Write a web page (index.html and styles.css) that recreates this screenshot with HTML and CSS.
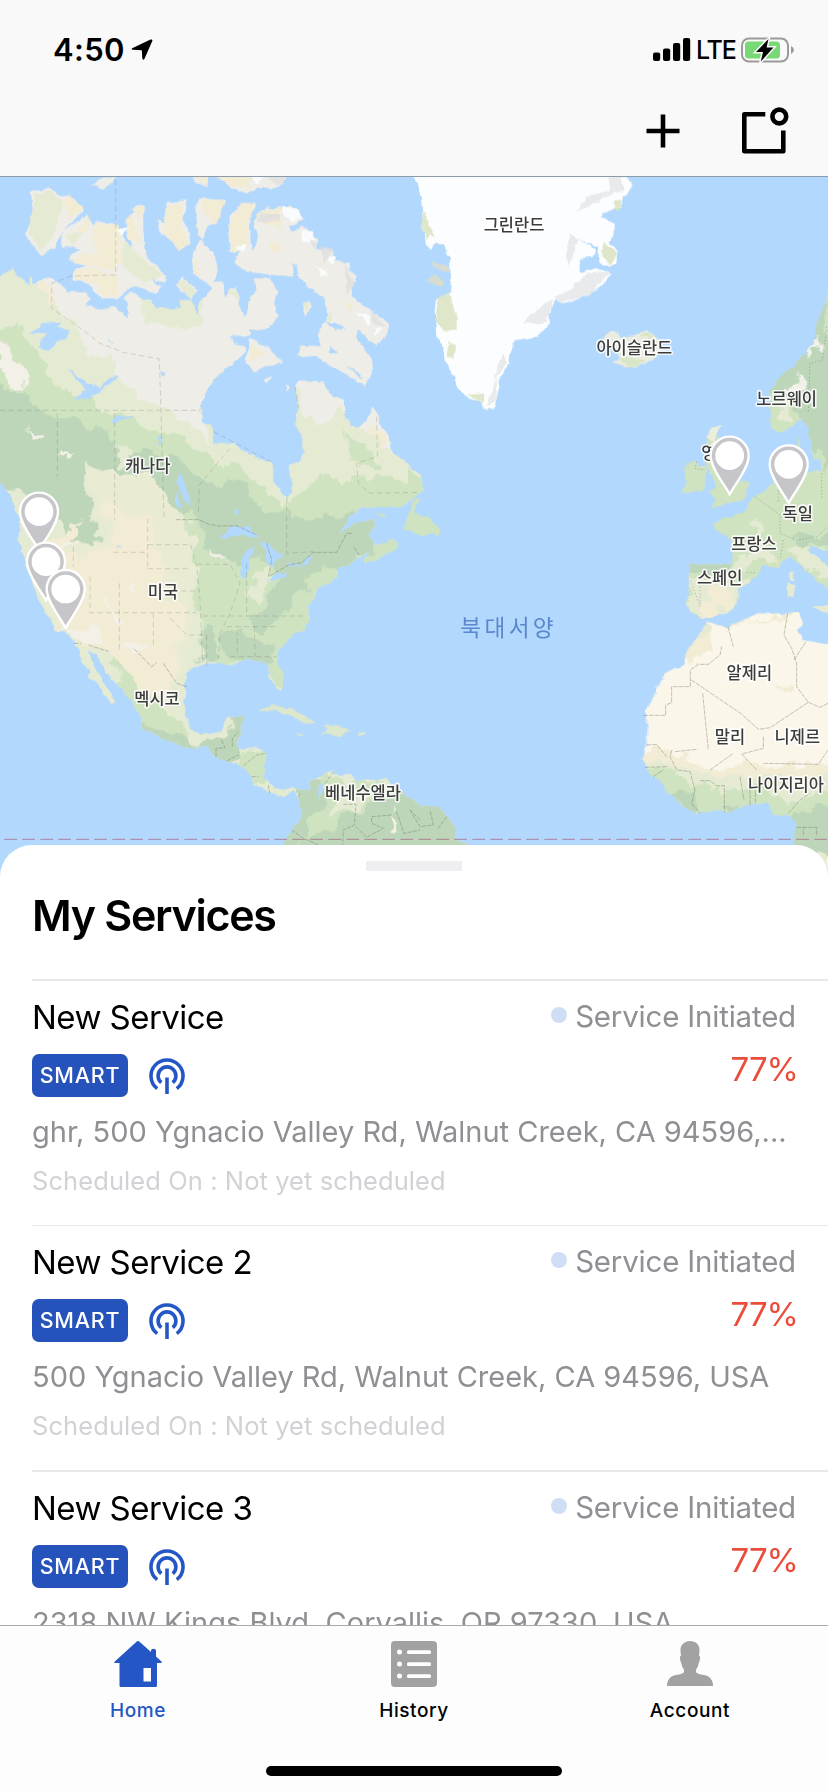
FILE: index.html
```html
<!DOCTYPE html>
<html lang="en">
<head>
<meta charset="utf-8">
<title>My Services</title>
<link rel="stylesheet" href="styles.css">
</head>
<body>
<svg class="defs" width="0" height="0" aria-hidden="true">
  <symbol id="beacon" viewBox="0 0 36 36">
    <g fill="none" stroke="#2457c5" stroke-width="3.6">
      <path d="M8.2 30.6A16 16 0 1 1 27.8 30.6"/>
      <path d="M12.3 24.6A8.9 8.9 0 1 1 23.7 24.6"/>
      <path d="M18 19.5V36"/>
    </g>
  </symbol>
</svg>
<div class="phone">
  <header class="header">
    <div class="status">
      <div class="clock">4:50
        <svg class="locate" width="22" height="22" viewBox="0 0 22 22"><path d="M1.2 9.2 19.5 .6Q22-.2 21.2 2.2L13.4 20Q12 21.6 11.3 19.6L10.8 11.2 2 10.8Q-.2 10.2 1.2 9.2Z"/></svg>
      </div>
      <div class="signals">
        <svg width="38" height="24" viewBox="0 0 38 24"><rect x="0" y="14.500" width="7.200" height="8.500" rx="2"/><rect x="10" y="10.500" width="7.200" height="12.500" rx="2"/><rect x="20" y="5" width="7.200" height="18" rx="2"/><rect x="30" y="0" width="7.200" height="23" rx="2"/></svg>
        <span class="lte">LTE</span>
        <svg class="battery" width="54" height="26" viewBox="0 0 54 26">
          <rect x="1" y="1.500" width="46" height="23" rx="7" fill="none" stroke="#9b9b9b" stroke-width="2"/>
          <rect x="4" y="4.500" width="35" height="17" rx="3.500" fill="#78d873"/>
          <path d="M50 9Q53 10.500 53 13T50 17Z" fill="#9b9b9b"/>
          <path d="M27.500 2 15 15H22L19.800 24.500 32.500 10.500H25.600Z" fill="#000" stroke="#f9f9f9" stroke-width="3" paint-order="stroke"/>
        </svg>
      </div>
    </div>
    <div class="actions">
      <svg width="34" height="34" viewBox="0 0 34 34"><path d="M17 .5V33.500M.5 17H33.500" stroke="#000" stroke-width="4.600"/></svg>
      <svg width="48" height="48" viewBox="0 0 48 48" fill="none" stroke="#000" stroke-width="4.600"><path d="M24.300 7.300H3.300V44.300H42.300V23.500" stroke-linejoin="round"/><circle cx="38.300" cy="9.500" r="6.900"/></svg>
    </div>
  </header>

  <div class="map">
    <svg width="828" height="700" viewBox="0 531 2484 2100" preserveAspectRatio="none">
      <defs>
        <filter id="coast" filterUnits="userSpaceOnUse" x="-60" y="480" width="2620" height="2200">
          <feTurbulence type="fractalNoise" baseFrequency=".035" numOctaves="3" seed="4"/>
          <feDisplacementMap in="SourceGraphic" scale="16" xChannelSelector="R" yChannelSelector="G"/>
        </filter>
        <filter id="terrain" filterUnits="userSpaceOnUse" x="-60" y="480" width="2620" height="2200">
          <feTurbulence type="fractalNoise" baseFrequency=".016" numOctaves="4" seed="9"/>
          <feDisplacementMap in="SourceGraphic" scale="75" xChannelSelector="R" yChannelSelector="G"/>
        </filter>
        <path id="north" d="M-60 830L0 830 40 800 60 840 90 855 85 835 95 825 98 850 130 835 160 835 185 855 200 875 260 878 272 898 255 918 300 930 345 920 383 955 385 915 370 895 405 880 430 900 450 900 470 925 540 925 540 900 575 900 595 950 595 915 640 860 650 845 670 845 675 900 690 865 715 870 715 910 730 950 742 940 745 910 755 890 770 870 765 835 805 835 833 870 822 910 833 950 800 990 750 985 750 1010 690 1010 700 1030 730 1035 735 1055 700 1090 670 1110 640 1140 603 1210 605 1270 635 1275 640 1328 700 1330 750 1365 818 1390 820 1445 860 1495 877 1475 865 1400 900 1380 912 1350 900 1300 883 1275 895 1230 885 1160 895 1142 970 1145 1000 1190 1035 1200 1035 1255 1068 1287 1100 1260 1118 1218 1140 1270 1165 1310 1172 1350 1230 1400 1262 1422 1268 1465 1240 1500 1200 1522 1090 1522 1050 1550 1015 1605 1060 1570 1120 1555 1120 1575 1105 1610 1130 1640 1150 1630 1180 1620 1195 1632 1180 1650 1100 1690 1093 1680 1110 1655 1050 1690 1015 1705 1010 1735 955 1760 940 1800 925 1825 918 1800 927 1855 915 1890 880 1900 835 1950 832 1980 850 2030 848 2075 835 2070 808 2030 805 1990 745 1975 690 1995 630 1987 590 2000 558 2020 555 2080 552 2140 575 2185 605 2205 665 2195 680 2155 735 2143 725 2180 710 2240 740 2248 770 2243 798 2258 790 2300 792 2330 820 2360 860 2370 875 2358 905 2370 928 2368 930 2340 1000 2310 1000 2325 1050 2325 1070 2340 1155 2337 1215 2380 1260 2417 1310 2420 1340 2445 1367 2490 1367 2515 1420 2540 1420 2700 840 2700 850 2530 875 2490 905 2450 900 2400 880 2370 850 2390 810 2380 760 2350 755 2325 720 2295 650 2275 620 2240 570 2245 500 2220 430 2185 420 2150 400 2110 355 2060 320 2020 290 1965 262 1952 275 1990 300 2030 325 2070 345 2100 343 2112 305 2080 300 2055 260 2030 270 2015 245 1985 235 1950 205 1900 165 1890 140 1840 110 1790 75 1680 55 1620 60 1560 40 1510 30 1480 0 1445 -60 1400Z"/>
        <path id="europe" d="M2500 870L2484 880 2450 970 2440 1030 2390 1090 2330 1140 2310 1170 2310 1280 2350 1298 2400 1260 2425 1280 2440 1375 2460 1375 2465 1410 2410 1420 2395 1310 2380 1380 2370 1420 2330 1440 2280 1480 2245 1505 2240 1530 2190 1550 2140 1570 2145 1590 2180 1605 2200 1650 2195 1692 2070 1695 2070 1740 2060 1800 2070 1838 2110 1855 2185 1840 2215 1810 2215 1770 2270 1730 2285 1695 2330 1700 2375 1670 2400 1695 2450 1745 2500 1775 2500 1705 2430 1660 2430 1640 2484 1650 2560 1700Z"/>
        <path id="africa" d="M2500 1937L2410 1920 2390 1890 2410 1875 2400 1835 2260 1845 2180 1880 2118 1865 2100 1905 2060 1950 2050 1995 1995 2025 1970 2060 1970 2080 1935 2130 1943 2170 1940 2235 1930 2270 1940 2310 1990 2350 1995 2370 2050 2420 2090 2442 2140 2430 2190 2437 2250 2412 2300 2410 2320 2442 2365 2445 2388 2465 2380 2545 2400 2700 2560 2700 2560 1937Z"/>
        <clipPath id="northClip"><use href="#north"/></clipPath>
        <clipPath id="europeClip"><use href="#europe"/></clipPath>
        <clipPath id="africaClip"><use href="#africa"/></clipPath>
        <g id="pin">
          <path d="M0 117C-8 96-57 40-57 0A57 57 0 0 1 57 0C57 40 8 96 0 117Z" fill="#c6c5ca" stroke="#fff" stroke-width="7" stroke-linejoin="round"/>
          <circle r="43" fill="#fff"/>
        </g>
      </defs>
      <rect x="-10" y="500" width="2520" height="2200" fill="#b3d8fd"/>

      <g filter="url(#coast)">
        <!-- North America -->
        <g clip-path="url(#northClip)">
          <rect x="-60" y="780" width="1600" height="1900" fill="#e5ebd2"/>
          <g filter="url(#terrain)">
            <path d="M80 810L900 800 870 1060 740 1060 600 1220 630 1330 540 1250 400 1200 350 1110 260 1040 200 960Z" fill="#eeede8"/>
            <path d="M880 1120L1060 1150 1060 1280 1130 1180 1190 1370 1120 1300 1040 1250 890 1260Z" fill="#eeede8"/>
            <path d="M420 880L600 900 590 970 540 990 430 960Z" fill="#e5ebd2"/>
            <path d="M-60 960L60 990 130 1080 170 1160 260 1200 400 1250 470 1290 600 1340 740 1420 840 1520 960 1440 1080 1430 1260 1440 1300 1560 1120 1760 940 1900 860 2100 780 1990 600 1990 590 1700 560 1560 500 1480 380 1340 240 1330 60 1240-60 1200Z" fill="#cfe3c0"/>
            <path d="M1030 1290L1090 1350 1150 1390 1130 1420 1050 1380Z" fill="#cfe3c0"/>
            <path d="M-60 1130L80 1180 120 1240 260 1270 330 1310 370 1400 440 1340 540 1380 620 1440 720 1450 800 1530 1000 1550 1160 1540 1120 1670 960 1720 830 1860 790 1900 740 1860 840 1740 780 1650 720 1690 620 1640 580 1560 500 1490 420 1440 250 1400 270 1540 320 1640 260 1680 180 1570 60 1480-60 1400Z" fill="#bdd5b8"/>
            <path d="M260 1420L450 1410 500 1480 560 1560 580 1680 570 1900 550 2000 500 2100 560 2200 440 2140 330 1960 150 1900 120 1700 220 1640 320 1620Z" fill="#e9ebd2"/>
            <path d="M310 1510L440 1540 450 1640 500 1700 480 1780 560 1840 530 2000 510 2100 420 2080 340 1960 240 1930 160 1850 130 1620 240 1560 200 1680 340 1640Z" fill="#f2ecd5"/>
            <path d="M620 1870L650 1880 650 1980 590 1980ZM680 1900L820 1930 840 1990 670 1975Z" fill="#bdd5b8"/>
            <path d="M860 1520L1000 1500 960 1560 880 1560Z" fill="#cfe3c0"/>
            <path d="M760 1740L820 1690 790 1780 750 1800Z" fill="#e5ebd2"/>
            <path d="M410 2130L460 2180 580 2230 680 2210 700 2140 750 2130 720 2280 650 2290 480 2240 390 2170Z" fill="#bdd5b8"/>
            <path d="M350 1980L430 2090 550 2170 560 2220 440 2170 340 2060Z" fill="#cfe3c0"/>
            <path d="M720 2260L820 2240 820 2370 740 2330Z" fill="#cfe3c0"/>
            <path d="M900 2350L1450 2350 1420 2700 800 2650Z" fill="#bdd5b8"/>
            <path d="M950 2320L1180 2340 1160 2380 1000 2480 900 2540 960 2400Z" fill="#cfe3c0"/>
            <path d="M1010 2390L1110 2380 1050 2440 990 2450Z" fill="#e5ebd2"/>
            <path d="M0 1030L60 1090 90 1160 40 1160 0 1110ZM310 1790L390 1900 340 1880ZM190 1630L230 1640 190 1670ZM390 1750L420 1760 400 1820ZM170 1880L300 1890 310 1930 200 1900ZM360 1930L450 1940 400 1970ZM1170 2430L1210 2470 1180 2500ZM640 1640L690 1680 650 1670ZM80 1280L130 1310 110 1330ZM170 1350L220 1350 200 1370Z" fill="#f3f0e7"/>
            <path d="M130 840L160 850 170 910 130 900ZM1110 1280L1160 1300 1150 1350Z" fill="#f2ecd5"/>
          </g>
          <!-- lakes -->
          <g fill="#b3d8fd">
            <path d="M90 998L130 970 185 965 170 985 210 990 200 1015 170 1025 150 1050 112 1040 140 1000Z"/>
            <path d="M200 1105L250 1140 300 1165 330 1130 355 1130 320 1160 270 1195 220 1198 258 1170ZM330 1270L350 1245 405 1252 360 1260ZM475 1115L500 1115 490 1130ZM320 1005L345 1035 330 1025ZM540 1420L560 1460 575 1520 550 1495 530 1450ZM525 1470L545 1520 530 1520ZM470 1310L485 1310 478 1340Z"/>
            <path d="M655 1610L700 1580 745 1578 780 1615 740 1608 700 1610ZM722 1730L722 1680 740 1645 765 1640 745 1690 742 1730ZM775 1630L805 1630 820 1650 850 1665 820 1690 820 1705 800 1690 800 1660ZM800 1740L830 1720 865 1718 850 1735ZM865 1690L905 1692 940 1660 925 1690 870 1702ZM350 1640L370 1640 355 1645ZM955 2360L975 2345 955 2410ZM700 1525L718 1530 708 1550Z"/>
          </g>
        </g>

        <!-- Arctic islands -->
        <g fill="#eeede8">
          <path d="M92 578L148 563 185 590 210 585 252 630 190 690 165 745 122 765 75 705 100 640Z"/>
          <path d="M190 690L265 640 275 680 290 660 340 670 370 700 375 740 395 790 385 645 430 620 430 690 440 770 497 825 495 845 450 835 485 860 470 880 400 860 350 895 300 895 265 850 220 840 225 810 260 795 205 775 240 745 185 740Z"/>
          <path d="M395 630L410 615 435 620 430 650ZM470 660L510 680 520 650 495 610 560 600 550 660 572 700 565 730 540 755 510 715 480 700ZM585 615L600 595 675 600 650 675 625 675 605 720 595 700ZM600 720L640 760 653 810 640 865 580 820 575 765ZM525 855L550 830 590 870 575 898ZM685 870L710 862 718 895 690 900Z"/>
          <path d="M685 700L690 650 725 612 768 612 745 650 750 700 755 755 775 720 760 665 800 620 840 630 870 615 915 655 870 680 875 695 910 680 955 720 950 745 1000 750 1000 780 1050 785 1045 810 1070 830 1060 850 1055 890 1125 940 1165 970 1160 1000 1130 1040 1075 990 1068 1010 1115 1075 1120 1110 1095 1160 1050 1130 970 1085 940 1065 890 1070 900 1040 960 1040 955 990 985 950 970 895 890 830 820 825 740 815 700 785 725 750 690 755Z"/>
          <path d="M735 1090L750 1020 790 1030 850 1090 800 1095 765 1118ZM905 910L930 905 935 925 915 950ZM790 1140L820 1125 800 1150ZM855 1150L865 1155 860 1175ZM370 895L400 875 410 885 380 910ZM275 555L310 530 350 530 310 568ZM570 525L625 525 622 558 585 545ZM645 525L865 525 835 560 770 565 740 580 690 562Z"/>
        </g>
        <g fill="#e5ebd2">
          <path d="M105 585L150 570 190 610 165 690 125 755 85 700ZM370 720L400 750 490 825 430 845 370 800ZM195 710L250 690 220 740ZM530 850L555 840 590 880 570 895ZM685 870L715 870 712 900ZM905 910L930 905 920 940ZM985 930L1000 945 990 985Z"/>
        </g>
        <g fill="#f2ecd5">
          <path d="M190 605L210 585 250 625 210 660ZM230 690L270 650 260 700ZM285 665L355 675 370 780 340 810 210 785 250 760 300 760 275 720ZM375 655L395 645 420 720 385 720ZM400 630L420 615 435 630 415 655ZM220 820L265 805 355 825 350 885 310 890 290 850 230 840ZM500 620L550 605 540 680 570 730 540 750 490 700ZM600 600L675 600 650 675 610 640ZM690 670L725 612 765 612 740 670 745 740 700 760 690 740ZM770 640L840 620 845 690 770 660ZM800 730L835 720 845 750 815 755ZM1030 905L1070 910 1050 940ZM755 1030L800 1060 750 1085ZM575 525L625 525 620 555ZM645 525L760 525 740 560 690 562ZM580 755L600 830 580 820Z"/>
        </g>
        <g fill="#fafbfc">
          <path d="M840 620L890 625 910 655 870 665ZM905 690L935 690 945 730 905 725ZM950 795L990 830 960 825ZM965 760L1005 770 1000 795ZM1070 935L1110 950 1110 980ZM1130 985L1155 980 1120 1010ZM350 690L385 680 370 705ZM750 525L790 525 770 555ZM700 745L740 730 735 755Z"/>
        </g>
        <g fill="#dedfdf" opacity=".8">
          <path d="M780 640L840 640 840 665 770 665ZM960 740L1000 745 975 790ZM1030 790L1065 850 1045 880ZM1110 930L1160 985 1120 970ZM930 720L955 730 945 750ZM790 525L860 530 835 555Z"/>
        </g>
        <path d="M975 960L1040 985 1010 995ZM990 1040L1015 1060 990 1060ZM1040 1095L1080 1120 1090 1140ZM875 790L895 800 895 840 880 830Z" fill="#b3d8fd"/>

        <!-- Greenland -->
        <path d="M1225 520L1254 550 1264 605 1269 670 1274 730 1294 750 1304 725 1334 740 1349 775 1354 850 1354 880 1309 895 1304 930 1309 1010 1329 1030 1334 1080 1359 1130 1384 1175 1404 1195 1439 1205 1459 1230 1482 1228 1499 1160 1499 1130 1524 1100 1529 1055 1544 1020 1614 1010 1649 970 1649 940 1664 900 1694 912 1754 890 1794 865 1836 820 1784 805 1739 820 1739 780 1784 765 1784 745 1735 715 1790 740 1800 790 1830 800 1850 785 1850 755 1829 725 1844 700 1844 670 1804 655 1804 640 1864 620 1869 585 1896 565 1879 520Z" fill="#fcfdfe"/>
        <path d="M1269 630L1305 710 1290 700 1280 720 1265 680ZM1315 890L1350 880 1370 940 1370 990 1340 995 1305 965ZM1345 1025L1365 1035 1360 1080 1340 1070ZM1400 1185L1455 1180 1450 1210ZM1815 725L1850 760 1830 795 1805 760ZM1845 600L1865 600 1860 630 1840 630Z" fill="#dfe7ca"/>
        <path d="M1825 530L1865 525 1870 570 1800 600 1730 635 1760 590 1830 570ZM1710 700L1735 720 1705 800 1700 750ZM1760 820L1830 815 1770 885 1680 910 1660 895 1720 860ZM1620 920L1660 900 1640 970 1570 970ZM1510 1060L1520 1090 1480 1140ZM1490 1130L1490 1200 1460 1220Z" fill="#e9eaec"/>
        <path d="M1288 835L1305 825 1335 840 1325 860 1285 850ZM1295 785L1345 800 1350 820 1300 800Z" fill="#d8dcd0"/>

        <!-- Iceland, Newfoundland, Caribbean -->
        <path d="M1815 1010L1830 990 1855 1000 1870 1010 1905 1005 1945 990 1980 1020 1990 1050 1960 1080 1900 1105 1835 1090 1860 1070 1850 1050 1800 1040Z" fill="#e9ecdf"/>
        <path d="M1850 1070L1940 1080 1895 1104ZM1920 1005L1950 995 1960 1020Z" fill="#d8e6c6"/>
        <path d="M1235 1510L1262 1490 1240 1540 1285 1550 1320 1590 1315 1615 1295 1600 1265 1610 1210 1585Z" fill="#cfe3c0"/>
        <path d="M1224 1400L1265 1440 1268 1470 1224 1485ZM1120 1535L1160 1548 1150 1553Z" fill="#cfe3c0"/>
        <path d="M775 2135L815 2112 885 2130 950 2168 905 2170 880 2150 820 2130ZM960 2200L985 2195 970 2175 1010 2175 1055 2195 1010 2208ZM885 2200L915 2205 895 2210ZM1073 2198H1095V2207H1073Z" fill="#dce7cb"/>

        <!-- Europe -->
        <g clip-path="url(#europeClip)">
          <rect x="2040" y="850" width="520" height="1080" fill="#cfe3c0"/>
          <g filter="url(#terrain)">
            <path d="M2470 900L2520 1180 2480 1400 2420 1330 2390 1220 2300 1170 2380 1080ZM2050 1680L2200 1690 2190 1720 2060 1720ZM2370 1620L2520 1590 2520 1630 2420 1640Z" fill="#bdd5b8"/>
            <path d="M2350 1160L2400 1120 2430 1140 2400 1200ZM2430 1030L2460 1010 2460 1050 2420 1070Z" fill="#f0f2ea"/>
            <path d="M2330 1200L2370 1220 2370 1270 2320 1260ZM2060 1740L2270 1720 2200 1850 2060 1850ZM2210 1660L2290 1650 2340 1690 2200 1690ZM2340 1640L2440 1640 2500 1740 2440 1720 2380 1660ZM2250 1570L2290 1570 2290 1630Z" fill="#e5ebd2"/>
            <path d="M2130 1770L2200 1760 2210 1820 2100 1850Z" fill="#f2ecd5"/>
          </g>
        </g>
        <path d="M2053 1410L2060 1385 2085 1383 2100 1400 2118 1395 2115 1470 2085 1475 2045 1480 2058 1450Z" fill="#cfe3c0"/>
        <path d="M2120 1310L2135 1280 2165 1275 2150 1300 2165 1330 2190 1390 2215 1445 2247 1450 2230 1500 2190 1510 2160 1515 2128 1528 2145 1500 2130 1480 2150 1460 2120 1400Z" fill="#cfe3c0"/>
        <path d="M2120 1310L2135 1280 2165 1275 2140 1330Z" fill="#eceedd"/>
        <path d="M2370 1715H2382V1740H2370ZM2362 1750L2385 1755 2380 1795 2363 1790ZM2432 1818L2490 1818 2490 1845Z" fill="#e5ebd2"/>

        <!-- Africa -->
        <g clip-path="url(#africaClip)">
          <rect x="1900" y="1800" width="640" height="900" fill="#faf7ea"/>
          <g filter="url(#terrain)">
            <path d="M2110 1870L2140 1900 2140 1960 2080 1990 2030 1990 2070 1900ZM2170 1870L2400 1830 2400 1850 2260 1860 2180 1890ZM2320 2050L2380 2060 2370 2080ZM1900 2265L2060 2250 2100 2300 2300 2300 2500 2290 2500 2350 2200 2360 1900 2320Z" fill="#f2ecd5"/>
            <path d="M2115 1865L2140 1880 2120 1920 2085 1925ZM1920 2295L2040 2290 2120 2330 2270 2330 2500 2330 2500 2700 1920 2700Z" fill="#e5ebd2"/>
            <path d="M1910 2310L2010 2305 2070 2360 2190 2370 2280 2360 2360 2410 2520 2370 2520 2520 2390 2470 1990 2470Z" fill="#cfe3c0"/>
            <path d="M2010 2380L2080 2375 2100 2420 2080 2450ZM2160 2410L2230 2400 2200 2440ZM2380 2430L2520 2440 2520 2550 2370 2600Z" fill="#bdd5b8"/>
          </g>
        </g>
      </g>

      <!-- borders -->
      <g fill="none" stroke="#70746c" stroke-opacity=".5" stroke-width="2.500">
        <g stroke-dasharray="16 10" stroke-opacity=".3">
          <path d="M347 540V825L215 828 155 850V925L235 980 300 1030 370 1057 478 1077 483 1230 485 1320 492 1560M0 1231H600M172 1240V1430M344 1240V1560M690 1345L598 1455 595 1545M860 1495V1660L940 1655M640 1295L820 1388M885 1160L897 1230M1130 1250L1132 1370 1070 1390 1075 1450 1110 1480 1260 1477"/>
          <path d="M443 1555V1706M340 1657H443M443 1634H572L590 1700 600 1800 608 1980M443 1706H570M440 1773H600M270 1730V1838H590M358 1750V1950M460 1840V1942M511 1855L560 1905H620V2000M590 1693H690L720 1750 690 1840 660 1900 655 1975M608 1848H920M680 1880H830M712 1890V1970M763 1880L765 1970M690 1970H830M740 1690V1850M220 1640V1700"/>
        </g>
        <path d="M528 1559H596L625 1572 655 1578 710 1577 770 1605M800 1630L815 1680 805 1730 865 1695 905 1688 940 1657H1010L1040 1600 1060 1600M1062 1642L1078 1665M222 1930H243M265 1935L325 1954M402 1946L455 2000 470 1988M490 1990L530 2050 560 2060" stroke-dasharray="14 4"/>
        <path d="M648 2270V2245L675 2243 662 2215M697 2240V2215L715 2195M680 2283L715 2265M730 2297L770 2265 800 2260M755 2330H775M805 2355L810 2380M900 2380L892 2395M975 2350L1000 2315M1030 2413H1068L1063 2475 1030 2490 1028 2540M1068 2480L1100 2512 1150 2485 1115 2470V2450L1175 2445M1190 2435L1212 2500 1260 2490M1260 2460L1230 2430M1230 2430L1260 2480 1300 2475 1290 2430M1315 2485L1340 2450M875 2490L905 2512 955 2535" stroke-dasharray="12 4"/>
        <path d="M1930 2146H1997V2115L2015 2108V2060H2071V2010L2095 1993H2125L2160 1965 2165 1940M2074 2040L2222 2140 2275 2188 2310 2183 2425 2107 2390 2060V1990L2375 1945 2352 1905 2363 1840M2382 1980L2418 1925M2184 1880L2200 1940M2108 2080L2125 2250M2425 2107L2460 2122 2484 2110M2290 2210V2245L2225 2262 2270 2310M2016 2250L2010 2270 2030 2310 2070 2315 2085 2370 2075 2410 2100 2440M2025 2255L2090 2248M1940 2235L1970 2233 2000 2270M1935 2302L2005 2300M1960 2330L1990 2310M2100 2342H2130L2150 2357H2173V2437M2130 2310L2200 2260M2220 2330L2232 2400M2250 2350V2415M2266 2360V2410M2290 2290L2455 2293 2484 2250M2365 2440L2400 2400 2430 2380M2390 2482H2450V2505M2410 2505V2485" stroke-dasharray="14 3"/>
        <path d="M2480 980L2468 1080 2430 1090 2425 1240M2090 1385L2085 1405 2115 1410M2265 1490L2340 1545 2340 1600 2390 1620 2450 1610 2484 1580M2240 1718H2270M2100 1730L2100 1820 2070 1735M2335 1470V1510M2465 1420V1500M2350 1620L2340 1680" stroke-dasharray="4 6"/>
        <path d="M13 2518H2484" stroke="#a8748c" stroke-opacity=".85" stroke-width="3" stroke-dasharray="38 16"/>
      </g>

      <g class="places">
        <text x="443" y="1416">캐나다</text>
        <text x="1542" y="693">그린란드</text>
        <text x="1903" y="1063">아이슬란드</text>
        <text x="2360" y="1214">노르웨이</text>
        <text x="2149" y="1376">영국</text>
        <text x="2393" y="1561">독일</text>
        <text x="2262" y="1650">프랑스</text>
        <text x="2159" y="1751">스페인</text>
        <text x="489" y="1795">미국</text>
        <text x="471" y="2115">멕시코</text>
        <text x="1089" y="2397">베네수엘라</text>
        <text x="2248" y="2036">알제리</text>
        <text x="2190" y="2229">말리</text>
        <text x="2392" y="2230">니제르</text>
        <text x="2358" y="2372">나이지리아</text>
        <text class="ocean" x="1526" y="1909">북대서양</text>
      </g>
      <use href="#pin" x="2189" y="1367"/>
      <use href="#pin" x="2366" y="1393"/>
      <use href="#pin" x="117" y="1535"/>
      <use href="#pin" x="138" y="1685"/>
      <use href="#pin" x="197" y="1767"/>
    </svg>
  </div>

  <main class="sheet">
    <div class="handle"></div>
    <h1 class="title">My Services</h1>
    <section class="row thick">
      <div class="top">
        <div><div class="name">New Service</div><div class="tags"><span class="chip">SMART</span><svg class="beacon"><use href="#beacon"/></svg></div></div>
        <div class="side"><div class="state"><i class="dot"></i><span>Service Initiated</span></div><div class="percent">77%</div></div>
      </div>
      <div class="address">ghr, 500 Ygnacio Valley Rd, Walnut Creek, CA 94596,...</div>
      <div class="schedule">Scheduled On : Not yet scheduled</div>
    </section>
    <section class="row">
      <div class="top">
        <div><div class="name">New Service 2</div><div class="tags"><span class="chip">SMART</span><svg class="beacon"><use href="#beacon"/></svg></div></div>
        <div class="side"><div class="state"><i class="dot"></i><span>Service Initiated</span></div><div class="percent">77%</div></div>
      </div>
      <div class="address">500 Ygnacio Valley Rd, Walnut Creek, CA 94596, USA</div>
      <div class="schedule">Scheduled On : Not yet scheduled</div>
    </section>
    <section class="row thick">
      <div class="top">
        <div><div class="name">New Service 3</div><div class="tags"><span class="chip">SMART</span><svg class="beacon"><use href="#beacon"/></svg></div></div>
        <div class="side"><div class="state"><i class="dot"></i><span>Service Initiated</span></div><div class="percent">77%</div></div>
      </div>
      <div class="address">2318 NW Kings Blvd, Corvallis, OR 97330, USA</div>
    </section>
  </main>

  <footer class="footer">
    <nav class="tabs">
      <a class="tab active">
        <svg width="48" height="46" viewBox="0 0 48 46"><path fill="#2457c5" fill-rule="evenodd" d="M22.500.8Q24 -.6 25.500.8L37 11V9Q39.500 6.500 42 9V15.500L47.500 20.500Q48.500 22 46.500 22H43V44.500Q43 46 41.500 46H7Q5.500 46 5.500 44.500V22H1.500Q-.5 22 .8 20.500ZM29.500 27V40.500H37V27Z"/></svg>
        <span>Home</span>
      </a>
      <a class="tab">
        <svg width="46" height="46" viewBox="0 0 46 46"><rect width="46" height="46" rx="4" fill="#a2a2a2"/><g fill="#fff"><circle cx="8.500" cy="11" r="2.500"/><circle cx="8.500" cy="23" r="2.500"/><circle cx="8.500" cy="35" r="2.500"/><rect x="16" y="9.200" width="24" height="3.800" rx="1.500"/><rect x="16" y="21.200" width="24" height="3.800" rx="1.500"/><rect x="16" y="33.200" width="24" height="3.800" rx="1.500"/></g></svg>
        <span>History</span>
      </a>
      <a class="tab">
        <svg width="46" height="46" viewBox="0 0 46 46"><path fill="#a2a2a2" d="M23 0C29 0 33 4 32.500 10L32 15Q34 15 32.500 20L31.500 23Q31 27 29 28.500V31Q30 33 37 34C43 35 46 39 46 45H0C0 39 3 35 9 34Q16 33 17 31V28.500Q15 27 14.500 23L13.500 20Q12 15 14 15L13.500 10C13 4 17 .5 23 0Z"/></svg>
        <span>Account</span>
      </a>
    </nav>
    <div class="indicator"></div>
  </footer>
</div>
</body>
</html>
```

FILE: styles.css
```css
* { box-sizing: border-box; }
body { margin: 0; background: #fff; font-family: Inter, "Liberation Sans", sans-serif; color: #000; }
svg { display: block; flex: none; }
.defs { position: absolute; }
.phone { width: 828px; height: 1792px; display: flex; flex-direction: column; overflow: hidden; }

.header { height: 177px; flex: none; background: #f9f9f9; border-bottom: 1px solid #8d9aa8; }
.status { height: 100px; padding: 0 33px 0 53px; display: flex; justify-content: space-between; }
.clock { display: flex; align-items: flex-start; gap: 6px; padding-top: 30px; font-size: 31px; line-height: 40px; font-weight: 600; letter-spacing: .3px; }
.locate { margin-top: 9px; }
.signals { display: flex; align-items: flex-start; padding-top: 38px; }
.lte { margin: -6px 0 0 5px; width: 38px; font-size: 25px; line-height: 36px; font-weight: 500; letter-spacing: -1.2px; }
.battery { margin: -1px 0 0 7px; }
.actions { display: flex; justify-content: flex-end; gap: 61px; padding: 7px 39px 0 0; }
.actions svg:first-child { margin-top: 7px; }

.map { height: 668px; flex: none; }
.places text { font: 500 49.5px "Noto Sans CJK KR", sans-serif; text-anchor: middle; fill: #3c3c3c; stroke: #fff; stroke-opacity: .8; stroke-width: 10px; stroke-linejoin: round; paint-order: stroke; }
.places .ocean { font-size: 68px; font-weight: 400; letter-spacing: 10px; fill: #5b87cc; stroke: none; }

.sheet { position: relative; height: 780px; flex: none; overflow: hidden; background: #fff; border-radius: 32px 32px 0 0; padding-top: 16px; }
.handle { width: 96px; height: 10px; margin: 0 auto; background: #eeeef0; }
.title { margin: 17px 0 37px 32px; font-size: 43px; line-height: 54px; font-weight: 600; letter-spacing: -1.3px; }
.row { height: 245px; margin-left: 32px; border-top: 1px solid #e8e8e9; }
.row.thick { height: 246px; border-top-width: 2px; }
.top { display: flex; justify-content: space-between; height: 116px; padding-right: 32px; }
.name { margin-top: 16px; font-size: 33px; line-height: 40px; letter-spacing: -.55px; white-space: nowrap; }
.tags { display: flex; align-items: center; gap: 21px; margin-top: 17px; }
.chip { width: 96px; height: 43px; border-radius: 7px; background: #2553bb; color: #fff; font-size: 21.5px; line-height: 43px; font-weight: 500; text-align: center; letter-spacing: .8px; }
.beacon { width: 36px; height: 36px; }
.side { display: flex; flex-direction: column; align-items: flex-end; color: #8f8f94; }
.state { display: flex; align-items: center; gap: 8px; margin-top: 17px; font-size: 29.5px; line-height: 36px; letter-spacing: -.2px; white-space: nowrap; }
.dot { width: 16px; height: 16px; margin-top: -2px; border-radius: 50%; background: #cfdef4; }
.percent { margin: 15px -2px 0 0; font-size: 33px; line-height: 40px; letter-spacing: -1px; color: #eb4d3d; }
.address { margin-top: 17px; font-size: 29px; line-height: 36px; color: #8f8f94; white-space: nowrap; }
.schedule { margin-top: 15px; font-size: 25.5px; line-height: 32px; letter-spacing: .08px; color: #d2d2d6; white-space: nowrap; }

.footer { height: 167px; flex: none; border-top: 1px solid #a9a9a9; background: #fdfdfd; }
.tabs { display: flex; height: 140px; }
.tab { flex: 1; display: flex; flex-direction: column; align-items: center; padding-top: 15px; font-size: 19px; font-weight: 500; line-height: 24px; letter-spacing: .6px; }
.tab span { margin-top: 12px; }
.active { color: #2457c5; }
.indicator { width: 296px; height: 10px; margin: 0 auto; border-radius: 5px; background: #000; }
```
